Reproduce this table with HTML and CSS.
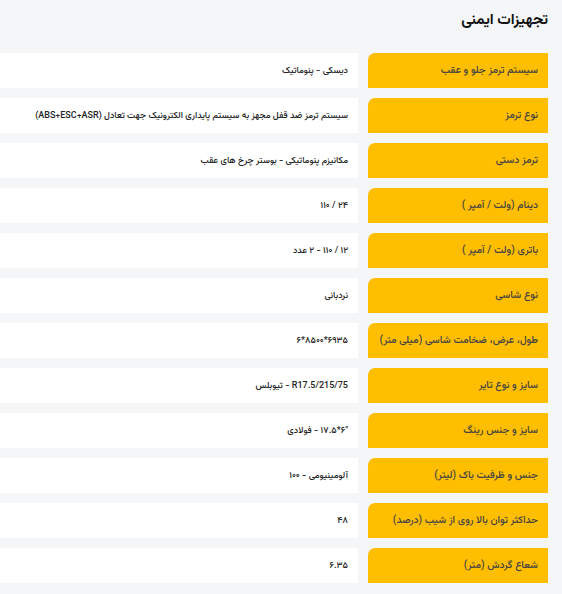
FILE: index.html
```html
<!DOCTYPE html>
<html lang="fa" dir="rtl">
<head>
<meta charset="utf-8">
<title>تجهیزات ایمنی</title>
<link rel="stylesheet" href="styles.css">
</head>
<body>
<div class="page">
  <h2 class="title">تجهیزات ایمنی</h2>
  <div class="specs">
    <div class="row"><div class="label">سیستم ترمز جلو و عقب</div><div class="value">دیسکی - پنوماتیک</div></div>
    <div class="row"><div class="label">نوع ترمز</div><div class="value">سیستم ترمز ضد قفل مجهز به سیستم پایداری الکترونیک جهت تعادل (ABS+ESC+ASR)</div></div>
    <div class="row"><div class="label">ترمز دستی</div><div class="value">مکانیزم پنوماتیکی - بوستر چرخ های عقب</div></div>
    <div class="row"><div class="label">دینام (ولت / آمپر )</div><div class="value">۲۴ / ۱۱۰</div></div>
    <div class="row"><div class="label">باتری (ولت / آمپر )</div><div class="value">۱۲ / ۱۱۰ - ۲ عدد</div></div>
    <div class="row"><div class="label">نوع شاسی</div><div class="value">نردبانی</div></div>
    <div class="row"><div class="label">طول، عرض، ضخامت شاسی (میلی متر)</div><div class="value">۶۹۳۵*۸۵۰۰*۶</div></div>
    <div class="row"><div class="label">سایز و نوع تایر</div><div class="value">R17.5/215/75 - تیوبلس</div></div>
    <div class="row"><div class="label">سایز و جنس رینگ</div><div class="value">"۶*۱۷.۵ - فولادی</div></div>
    <div class="row"><div class="label">جنس و ظرفیت باک (لیتر)</div><div class="value">آلومینیومی - ۱۰۰</div></div>
    <div class="row"><div class="label">حداکثر توان بالا روی از شیب (درصد)</div><div class="value">۴۸</div></div>
    <div class="row"><div class="label">شعاع گردش (متر)</div><div class="value">۶.۳۵</div></div>
  </div>
</div>
</body>
</html>
```

FILE: styles.css
```css
html, body {
  margin: 0;
  padding: 0;
  background: #f5f6f8;
}

body {
  font-family: "Vazirmatn", "Noto Sans Arabic", "DejaVu Sans", sans-serif;
  color: #333;
}

.page {
  padding: 9px 14px 0 0;
}

.title {
  margin: 0 0 20px 0;
  font-size: 15px;
  line-height: 24px;
  font-weight: bold;
  color: #111;
}

.specs {
  display: flex;
  flex-direction: column;
  gap: 10px;
}

.row {
  display: flex;
  gap: 10px;
  height: 35px;
}

.label {
  flex: 0 0 180px;
  box-sizing: border-box;
  background: #ffbe00;
  border-top-left-radius: 7px;
  display: flex;
  align-items: center;
  padding-right: 10px;
  font-size: 10.3px;
  font-weight: 500;
  color: #444;
  white-space: nowrap;
}

.value {
  flex: 1;
  background: #ffffff;
  display: flex;
  align-items: center;
  padding-right: 10px;
  font-size: 9px;
  font-weight: 500;
  color: #222;
  white-space: nowrap;
  overflow: hidden;
}
```
